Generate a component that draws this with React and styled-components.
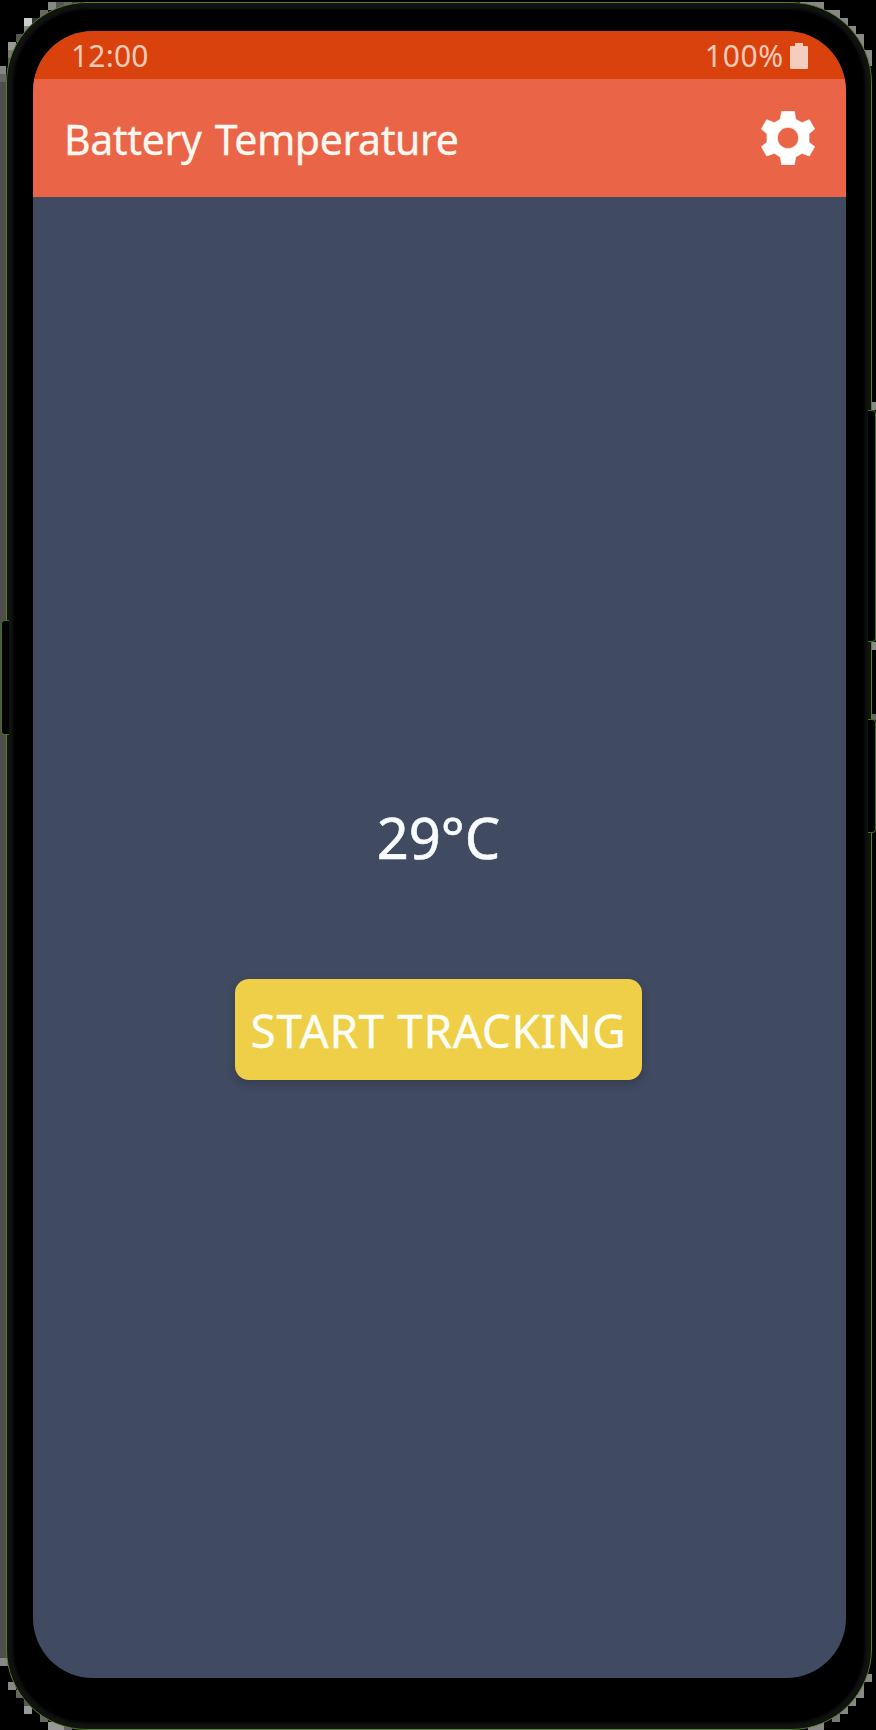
import React from 'react';
import styled, { createGlobalStyle } from 'styled-components';

const GlobalStyle = createGlobalStyle`
  * { box-sizing: border-box; }
  body { margin: 0; background: #000; font-family: "Noto Sans", sans-serif; }
`;

const Stage = styled.div`
  position: relative;
  width: 876px;
  height: 1730px;
  overflow: hidden;
  padding: 2px 4px 0 6px;
  background: #000;
`;

const Backdrop = styled.svg`
  position: absolute;
  inset: 0;
`;

const Phone = styled.div`
  position: relative;
  height: 1728px;
  padding: 28px 25px 50px 26px;
  border: 1px solid #56802b;
  border-radius: 81px;
  background: #000;
  box-shadow: inset 0 0 3px 6px #111311;
`;

const SideButton = styled.div`
  position: absolute;
  left: ${(p) => (p.$side === 'left' ? 1 : 868)}px;
  top: ${(p) => p.$top}px;
  width: 8px;
  height: ${(p) => p.$height}px;
  background: #000;
  border: 1px solid #41701f;
  border-${(p) => (p.$side === 'left' ? 'right' : 'left')}: 0;
  border-radius: ${(p) => (p.$side === 'left' ? '4px 0 0 4px' : '0 4px 4px 0')};
`;

const Screen = styled.div`
  height: 1647px;
  display: flex;
  flex-direction: column;
  border-radius: 60px;
  overflow: hidden;
  background: #404a60;
`;

const StatusBar = styled.div`
  height: 48px;
  flex: none;
  display: flex;
  justify-content: space-between;
  align-items: center;
  padding: 2px 38px 0 38px;
  background: #d9410d;
  color: #f8cab8;
`;

const StatusText = styled.span`
  font-size: 30px;
  line-height: 40px;
  letter-spacing: ${(p) => p.$spacing || 0}px;
`;

const BatteryGroup = styled.div`
  display: flex;
  align-items: center;
  gap: 6px;
`;

const AppBar = styled.header`
  height: 118px;
  flex: none;
  display: flex;
  justify-content: space-between;
  align-items: center;
  padding: 0 31px 0 31px;
  background: #ea6547;
`;

const Title = styled.h1`
  margin: 0;
  padding-top: 2px;
  font-size: 41px;
  font-weight: 400;
  line-height: 56px;
  letter-spacing: -0.4px;
  word-spacing: 3px;
  color: #fff8f1;
  -webkit-text-stroke: 0.3px #fff8f1;
  white-space: nowrap;
`;

const SettingsButton = styled.button`
  display: flex;
  padding: 0;
  border: 0;
  background: none;
`;

const Content = styled.main`
  flex: 1;
  display: flex;
  flex-direction: column;
  align-items: center;
  padding: 601px 2px 0 0;
`;

const Reading = styled.div`
  height: 78px;
  line-height: 78px;
  font-size: 56px;
  color: #f8fbff;
  -webkit-text-stroke: 0.6px #f8fbff;
  white-space: nowrap;
`;

const TrackButton = styled.button`
  width: 407px;
  height: 101px;
  margin-top: 103px;
  padding: 0;
  border: 0;
  border-radius: 14px;
  background: #eecf47;
  color: #fffff8;
  -webkit-text-stroke: 0.3px #fffff8;
  font-family: inherit;
  font-size: 46px;
  line-height: 100px;
  letter-spacing: 0.6px;
  white-space: nowrap;
  box-shadow: 0 4px 8px rgba(20, 25, 40, 0.25);
`;

/* Stepped fringe around the handset: x, y, width, height, colour */
const FRINGE = [
  [0, 66, 6, 8, '#858585'], [0, 74, 6, 8, '#666'],
  [8, 42, 8, 8, '#999'], [8, 50, 8, 8, '#777'], [8, 58, 8, 8, '#555'],
  [16, 34, 8, 8, '#555'], [24, 18, 8, 8, '#ccc'], [24, 26, 8, 8, '#888'],
  [32, 18, 8, 8, '#333'], [40, 10, 8, 8, '#666'], [48, 2, 8, 8, '#888'],
  [56, 2, 8, 8, '#555'], [64, 2, 8, 8, '#666'], [72, 2, 8, 8, '#444'],
  [800, 2, 24, 8, '#888'], [816, 10, 24, 8, '#888'], [832, 18, 16, 8, '#888'],
  [840, 26, 16, 8, '#888'], [848, 34, 16, 16, '#888'], [856, 50, 16, 16, '#888'],
  [0, 1658, 8, 8, '#888'], [8, 1682, 8, 8, '#888'], [16, 1690, 8, 8, '#666'],
  [24, 1698, 8, 8, '#555'], [24, 1706, 8, 8, '#999'], [40, 1714, 8, 8, '#666'],
  [48, 1722, 16, 8, '#999'], [64, 1722, 8, 8, '#666'],
  [864, 1674, 8, 8, '#888'], [856, 1682, 8, 16, '#888'], [848, 1698, 8, 8, '#888'],
  [840, 1706, 8, 8, '#888'], [832, 1714, 8, 8, '#777'], [808, 1722, 16, 8, '#888'],
  [872, 402, 4, 8, '#888'], [872, 642, 4, 8, '#888'], [872, 714, 4, 6, '#666'],
];

export default function App() {
  return (
    <>
      <GlobalStyle />
      <Stage>
        <Backdrop width="876" height="1730" shapeRendering="crispEdges">
          <path fill="#504d4d" d="M0 82h8v1576H0z" />
          {FRINGE.map(([x, y, width, height, fill]) => (
            <rect key={`${x}-${y}`} x={x} y={y} width={width} height={height} fill={fill} />
          ))}
        </Backdrop>
        <Phone>
          <Screen>
            <StatusBar>
              <StatusText $spacing={0.2}>12:00</StatusText>
              <BatteryGroup>
                <StatusText $spacing={0.7}>100%</StatusText>
                <svg width="18" height="26" viewBox="0 0 18 26">
                  <path fill="#f5cdbd" d="M5 0h8v3h4a1 1 0 0 1 1 1v21a1 1 0 0 1-1 1H1a1 1 0 0 1-1-1V4a1 1 0 0 1 1-1h4z" />
                </svg>
              </BatteryGroup>
            </StatusBar>
            <AppBar>
              <Title>Battery Temperature</Title>
              <SettingsButton aria-label="Settings">
                <svg width="54" height="54" viewBox="257 333 162 162">
                  <path
                    fill="#fff"
                    stroke="#fff"
                    strokeWidth="2"
                    strokeLinejoin="round"
                    fillRule="evenodd"
                    d="M319 334H357L361 358L380 368L402 359L418 387L401 401V427L418 440L402 468L380 460L361 471L357 494H319L315 471L297 460L274 468L258 440L275 427V401L258 387L274 359L297 368L315 358ZM338 382a32 32 0 1 0 0 64a32 32 0 1 0 0-64Z"
                  />
                </svg>
              </SettingsButton>
            </AppBar>
            <Content>
              <Reading>29°C</Reading>
              <TrackButton>START TRACKING</TrackButton>
            </Content>
          </Screen>
        </Phone>
        <SideButton $side="left" $top={620} $height={115} />
        <SideButton $side="right" $top={410} $height={232} />
        <SideButton $side="right" $top={719} $height={114} />
      </Stage>
    </>
  );
}
